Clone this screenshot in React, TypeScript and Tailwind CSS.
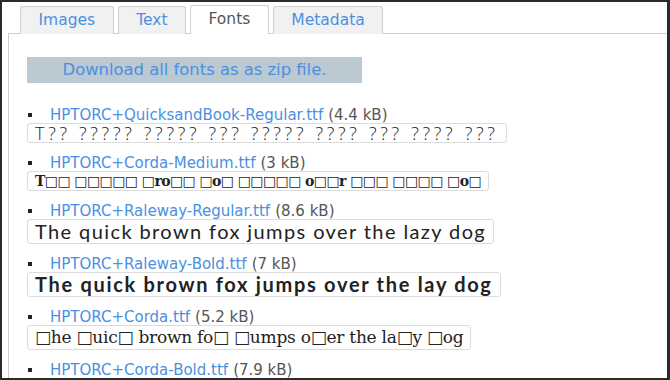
import React, { useState } from 'react';

interface FontEntry {
  name: string;
  size: string;
  sample: string;
  sampleClass: string;
}

const fonts: FontEntry[] = [
  {
    name: 'HPTORC+QuicksandBook-Regular.ttf',
    size: '4.4 kB',
    sample: 'T?? ????? ????? ??? ????? ???? ??? ???? ???',
    sampleClass: "font-['Open_Sans',sans-serif] text-[18px] font-light tracking-[3.7px] h-[20px] leading-[18px]",
  },
  {
    name: 'HPTORC+Corda-Medium.ttf',
    size: '3 kB',
    sample: 'T\u25A1\u25A1 \u25A1\u25A1\u25A1\u25A1\u25A1 \u25A1ro\u25A1\u25A1 \u25A1o\u25A1 \u25A1\u25A1\u25A1\u25A1\u25A1 o\u25A1\u25A1r \u25A1\u25A1\u25A1 \u25A1\u25A1\u25A1\u25A1 \u25A1o\u25A1',
    sampleClass: "font-['DejaVu_Serif',serif] text-[14px] font-bold tracking-[-0.6px] h-[20px] leading-[18px]",
  },
  {
    name: 'HPTORC+Raleway-Regular.ttf',
    size: '8.6 kB',
    sample: 'The quick brown fox jumps over the lazy dog',
    sampleClass: "font-['Lato',sans-serif] text-[20px] tracking-[1.4px] h-[25px] leading-[23px]",
  },
  {
    name: 'HPTORC+Raleway-Bold.ttf',
    size: '7 kB',
    sample: 'The quick brown fox jumps over the lay dog',
    sampleClass: "font-['Lato',sans-serif] text-[20px] font-bold tracking-[1.7px] h-[25px] leading-[23px]",
  },
  {
    name: 'HPTORC+Corda.ttf',
    size: '5.2 kB',
    sample: '\u25A1he \u25A1uic\u25A1 brown fo\u25A1 \u25A1umps o\u25A1er the la\u25A1y \u25A1og',
    sampleClass: "font-['DejaVu_Serif',serif] text-[17px] tracking-[-0.25px] h-[25px] leading-[23px]",
  },
  {
    name: 'HPTORC+Corda-Bold.ttf',
    size: '7.9 kB',
    sample: '',
    sampleClass: '',
  },
];

const tabs = ['Images', 'Text', 'Fonts', 'Metadata'];

function App() {
  const [active, setActive] = useState('Fonts');

  return (
    <div className="w-[670px] h-[380px] overflow-hidden bg-[#2a2a2a] pt-[2px] pl-[2px] pr-[3px] pb-[2px] font-['DejaVu_Sans',Verdana,sans-serif]">
      <div className="h-full bg-white pl-[6px] overflow-hidden">
        <div className="flex gap-[4px] pl-[12px] pt-[3px] h-[31px] relative">
          {tabs.map((t) => (
            <button
              key={t}
              onClick={() => setActive(t)}
              className={
                t === active
                  ? 'relative z-10 h-[29px] px-[17.5px] border border-b-0 border-[#cfcfcf] rounded-t-[3px] bg-white text-[15.5px] text-[#555] -mb-px'
                  : 'h-[28px] mt-px px-[17.5px] border border-b-0 border-[#cfcfcf] rounded-t-[3px] bg-[#f1f1f1] text-[15.5px] text-[#4a90e2]'
              }
            >
              {t}
            </button>
          ))}
        </div>
        <div className="border-l border-t border-[#cfcfcf] h-full pl-[18px] pt-[23px]">
          <button className="w-[335px] h-[26px] bg-[#bac9d2] text-[#4a90e2] text-[16.4px]">
            Download all fonts as as zip file.
          </button>
          <ul className="mt-[24px] flex flex-col gap-[12px]">
            {fonts.map((f) => (
              <li key={f.name}>
                <div className="flex items-center h-[16px] text-[15px] leading-[16px]">
                  <span className="w-[4px] h-[4px] bg-[#222] ml-[1px] mr-[18px]" />
                  <a href="#" className="text-[#4a90e2]">{f.name}</a>
                  <span className="ml-[5px] text-[#555]">({f.size})</span>
                </div>
                {f.sample && (
                  <div
                    className={
                      'w-fit px-[7px] border border-[#dcdcdc] rounded-[3px] text-[#222] whitespace-nowrap ' +
                      f.sampleClass
                    }
                  >
                    {f.sample}
                  </div>
                )}
              </li>
            ))}
          </ul>
        </div>
      </div>
    </div>
  );
}

export default App;
